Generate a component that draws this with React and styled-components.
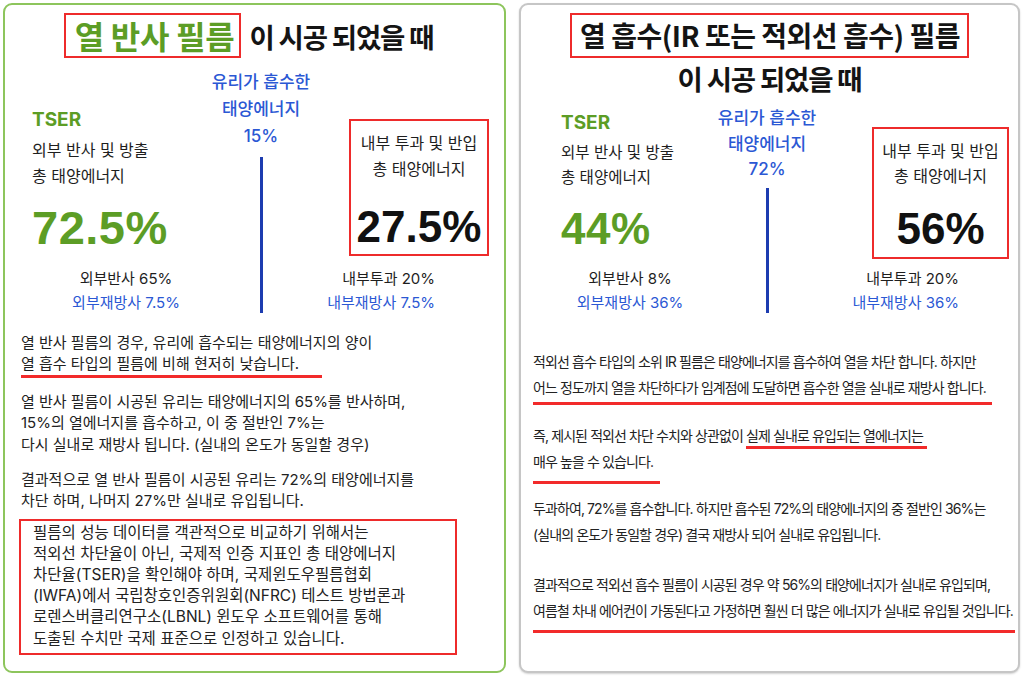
import React from 'react';
import styled, { createGlobalStyle } from 'styled-components';

const Global = createGlobalStyle`
  html, body { margin: 0; padding: 0; background: #fff; }
  body { font-family: Inter, "Noto Sans CJK KR", sans-serif; color: #1d1d1d; }
`;

const GREEN = '#5c9d25';
const BLUE = '#2b58d4';
const RED = '#ee2b2b';
const KR = '"Noto Sans CJK KR", Inter, sans-serif';
const NUM = '"Liberation Sans", Arial, sans-serif';

const Page = styled.div`
  display: flex;
  gap: 13px;
  padding: 3px 0 0 3px;
  width: 1024px;
  height: 683px;
  box-sizing: border-box;
  overflow: hidden;
`;

const Card = styled.section`
  box-sizing: border-box;
  width: ${p => p.$w}px;
  height: 670px;
  flex: none;
  border: 2px solid ${p => p.$border};
  border-radius: 9px;
  padding: 8px ${p => p.$pr}px 0 ${p => p.$pl}px;
  display: flex;
  flex-direction: column;
  background: #fff;
  box-shadow: ${p => p.$shadow ? '0 1px 2px rgba(0,0,0,0.18)' : 'none'};
`;

const TitleRow = styled.div`
  display: flex;
  flex-direction: ${p => p.$stack ? 'column' : 'row'};
  justify-content: center;
  align-items: center;
  gap: ${p => p.$gap}px;
  padding-right: ${p => p.$shift || 0}px;
`;

const TitleBox = styled.div`
  border: 2px solid ${RED};
  padding: 0 ${p => p.$pr}px 0 ${p => p.$pl}px;
  font-family: ${KR};
  font-size: ${p => p.$fs}px;
  font-weight: 700;
  line-height: 41px;
  letter-spacing: ${p => p.$ls || 0}px;
  color: ${p => p.$color};
  white-space: nowrap;
`;

const TitleText = styled.div`
  font-family: ${KR};
  font-size: 27.5px;
  font-weight: 700;
  line-height: 34px;
  letter-spacing: -1.2px;
  color: #141414;
  white-space: nowrap;
`;

const Diagram = styled.div`
  display: grid;
  grid-template-columns: ${p => p.$cols};
  grid-template-rows: auto auto;
  margin: ${p => p.$mt}px 0 0 ${p => p.$ml}px;
`;

const Side = styled.div`
  grid-column: 1;
  grid-row: 1;
  padding-top: ${p => p.$pt}px;
  display: flex;
  flex-direction: column;
  align-items: flex-start;
`;

const Tser = styled.div`
  font-size: 19px;
  font-weight: 700;
  line-height: 24px;
  color: ${GREEN};
`;

const Desc = styled.div`
  margin-top: ${p => p.$mt ?? 5}px;
  font-size: ${p => p.$fs}px;
  line-height: ${p => p.$lh}px;
  color: #1e1e1e;
  white-space: nowrap;
  text-align: ${p => p.$center ? 'center' : 'left'};
`;

const BigNum = styled.div`
  margin-top: ${p => p.$mt}px;
  font-family: ${NUM};
  font-size: ${p => p.$fs}px;
  font-weight: 700;
  line-height: ${p => p.$lh || 50}px;
  letter-spacing: ${p => p.$ls || 0}px;
  color: ${p => p.$color};
  white-space: nowrap;
`;

const Center = styled.div`
  grid-column: 2;
  grid-row: 1 / span 2;
  display: flex;
  flex-direction: column;
  align-items: center;
`;

const Absorbed = styled.div`
  font-size: 17px;
  font-weight: 500;
  line-height: ${p => p.$lh}px;
  color: ${BLUE};
  text-align: center;
  white-space: nowrap;
`;

const VLine = styled.div`
  flex: 1;
  width: 3px;
  background: #1d3cb0;
  margin: ${p => p.$mt}px 0 2px;
`;

const InBox = styled.div`
  grid-column: 3;
  grid-row: 1;
  justify-self: end;
  align-self: start;
  box-sizing: border-box;
  width: ${p => p.$w}px;
  margin-top: ${p => p.$mt}px;
  border: 2px solid ${RED};
  padding: ${p => p.$pt}px 0 ${p => p.$pb}px;
  display: flex;
  flex-direction: column;
  align-items: center;
`;

const Split = styled.div`
  grid-column: ${p => p.$col};
  grid-row: 2;
  margin-top: ${p => p.$mt}px;
  padding: 0 ${p => p.$pr || 0}px 0 ${p => p.$pl || 0}px;
  text-align: ${p => p.$align};
  font-size: 15px;
  line-height: 24px;
  white-space: nowrap;
`;

const Plain = styled.div`
  color: #1e1e1e;
`;

const Blue = styled.div`
  color: ${BLUE};
`;

const Para = styled.p`
  margin: ${p => p.$mt}px 0 0;
  font-size: ${p => p.$fs}px;
  line-height: ${p => p.$lh}px;
  letter-spacing: ${p => p.$ls || 0}px;
  white-space: nowrap;
  color: #222;
`;

const Mark = styled.span`
  border-bottom: 3px solid #f22a2a;
  padding-bottom: ${p => p.$pb}px;
  padding-right: ${p => p.$pr || 0}px;
`;

const Note = styled.div`
  margin: 7px 0 0 -2px;
  width: 438px;
  box-sizing: border-box;
  border: 2px solid ${RED};
  padding: 1px 0 4px 12px;
  font-size: 15.5px;
  line-height: 21.2px;
  white-space: nowrap;
  color: #222;
`;

export default function App() {
  return (
    <>
      <Global />
      <Page>
        <Card $w={503} $border="#8dc55c" $pl={16} $pr={16}>
          <TitleRow $gap={8} $shift={12}>
            <TitleBox $fs={32} $pl={9} $pr={5} $ls={-0.3} $color={GREEN}>열 반사 필름</TitleBox>
            <TitleText>이 시공 되었을 때</TitleText>
          </TitleRow>

          <Diagram $cols="174px 110px 173px" $mt={11} $ml={11}>
            <Side $pt={39}>
              <Tser>TSER</Tser>
              <Desc $fs={16} $lh={26}>외부 반사 및 방출<br />총 태양에너지</Desc>
              <BigNum $mt={11} $fs={47} $lh={56} $ls={0.5} $color={GREEN}>72.5%</BigNum>
            </Side>
            <Center>
              <Absorbed $lh={27}>유리가 흡수한<br />태양에너지<br />15%</Absorbed>
              <VLine $mt={7} />
            </Center>
            <InBox $w={140} $mt={50} $pt={9} $pb={2}>
              <Desc $fs={16} $lh={26} $mt={0} $center>내부 투과 및 반입<br />총 태양에너지</Desc>
              <BigNum $mt={20} $fs={44} $color="#111">27.5%</BigNum>
            </InBox>
            <Split $col={1} $mt={11} $pl={14} $align="center">
              <Plain>외부반사 65%</Plain>
              <Blue>외부재방사 7.5%</Blue>
            </Split>
            <Split $col={3} $mt={11} $pr={54} $align="right">
              <Plain>내부투과 20%</Plain>
              <Blue>내부재방사 7.5%</Blue>
            </Split>
          </Diagram>

          <Para $mt={16.5} $fs={15} $lh={21.5}>
            열 반사 필름의 경우, 유리에 흡수되는 태양에너지의 양이<br />
            <Mark $pb={2} $pr={23}>열 흡수 타입의 필름에 비해 현저히 낮습니다.</Mark>
          </Para>
          <Para $mt={16} $fs={15} $lh={21.5}>
            열 반사 필름이 시공된 유리는 태양에너지의 65%를 반사하며,<br />
            15%의 열에너지를 흡수하고, 이 중 절반인 7%는<br />
            다시 실내로 재방사 됩니다. (실내의 온도가 동일할 경우)
          </Para>
          <Para $mt={13.5} $fs={15} $lh={21.5}>
            결과적으로 열 반사 필름이 시공된 유리는 72%의 태양에너지를<br />
            차단 하며, 나머지 27%만 실내로 유입됩니다.
          </Para>
          <Note>
            필름의 성능 데이터를 객관적으로 비교하기 위해서는<br />
            적외선 차단율이 아닌, 국제적 인증 지표인 총 태양에너지<br />
            차단율(TSER)을 확인해야 하며, 국제윈도우필름협회<br />
            (IWFA)에서 국립창호인증위원회(NFRC) 테스트 방법론과<br />
            로렌스버클리연구소(LBNL) 윈도우 소프트웨어를 통해<br />
            도출된 수치만 국제 표준으로 인정하고 있습니다.
          </Note>
        </Card>

        <Card $w={501} $border="#c6c6c6" $pl={12} $pr={12} $shadow>
          <TitleRow $stack $gap={3}>
            <TitleBox $fs={28} $pl={8} $pr={7} $ls={-0.5} $color="#141414">열 흡수(IR 또는 적외선 흡수) 필름</TitleBox>
            <TitleText>이 시공 되었을 때</TitleText>
          </TitleRow>

          <Diagram $cols="151px 110px 187px" $mt={11} $ml={28}>
            <Side $pt={5}>
              <Tser>TSER</Tser>
              <Desc $fs={15.5} $lh={25}>외부 반사 및 방출<br />총 태양에너지</Desc>
              <BigNum $mt={14} $fs={44} $ls={0.5} $color={GREEN}>44%</BigNum>
            </Side>
            <Center>
              <Absorbed $lh={25.5}>유리가 흡수한<br />태양에너지<br />72%</Absorbed>
              <VLine $mt={5.5} />
            </Center>
            <InBox $w={137} $mt={21} $pt={10} $pb={3}>
              <Desc $fs={16} $lh={25} $mt={0} $center>내부 투과 및 반입<br />총 태양에너지</Desc>
              <BigNum $mt={15} $fs={44} $color="#111">56%</BigNum>
            </InBox>
            <Split $col={1} $mt={8} $pr={13} $align="center">
              <Plain>외부반사 8%</Plain>
              <Blue>외부재방사 36%</Blue>
            </Split>
            <Split $col={3} $mt={8} $pr={50} $align="right">
              <Plain>내부투과 20%</Plain>
              <Blue>내부재방사 36%</Blue>
            </Split>
          </Diagram>

          <Para $mt={33.75} $fs={14} $lh={26.5} $ls={-0.9}>
            적외선 흡수 타입의 소위 IR 필름은 태양에너지를 흡수하여 열을 차단 합니다. 하지만<br />
            <Mark $pb={6} $pr={6}>어느 정도까지 열을 차단하다가 임계점에 도달하면 흡수한 열을 실내로 재방사 합니다.</Mark>
          </Para>
          <Para $mt={21} $fs={14} $lh={26.5} $ls={-0.9}>
            즉, 제시된 적외선 차단 수치와 상관없이 <Mark $pb={2} $pr={4}>실제 실내로 유입되는 열에너지는</Mark><br />
            <Mark $pb={11} $pr={7}>매우 높을 수 있습니다.</Mark>
          </Para>
          <Para $mt={20} $fs={14} $lh={26.5} $ls={-0.9}>
            두과하여, 72%를 흡수합니다. 하지만 흡수된 72%의 태양에너지의 중 절반인 36%는<br />
            (실내의 온도가 동일할 경우) 결국 재방사 되어 실내로 유입됩니다.
          </Para>
          <Para $mt={23} $fs={14} $lh={26.5} $ls={-0.9}>
            결과적으로 적외선 흡수 필름이 시공된 경우 약 56%의 태양에너지가 실내로 유입되며,<br />
            <Mark $pb={11} $pr={2}>여름철 차내 에어컨이 가동된다고 가정하면 훨씬 더 많은 에너지가 실내로 유입될 것입니다.</Mark>
          </Para>
        </Card>
      </Page>
    </>
  );
}
